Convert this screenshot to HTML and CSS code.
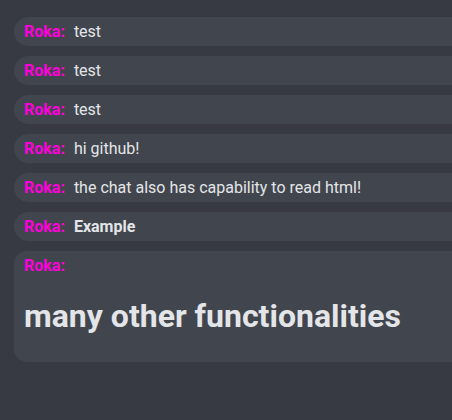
FILE: index.html
```html
<!DOCTYPE html>
<html>
<head>
<meta charset="utf-8">
<link rel="stylesheet" href="styles.css">
</head>
<body>
<div class="chat">
  <div class="msg"><span class="name">Roka:</span> <span class="text">test</span></div>
  <div class="msg"><span class="name">Roka:</span> <span class="text">test</span></div>
  <div class="msg"><span class="name">Roka:</span> <span class="text">test</span></div>
  <div class="msg"><span class="name">Roka:</span> <span class="text">hi github!</span></div>
  <div class="msg"><span class="name">Roka:</span> <span class="text">the chat also has capability to read html!</span></div>
  <div class="msg"><span class="name">Roka:</span> <span class="text"><b>Example</b></span></div>
  <div class="msg big"><span class="name">Roka:</span> <h1 class="heading">many other functionalities</h1></div>
</div>
</body>
</html>
```
FILE: styles.css
```css
html, body {
  margin: 0;
  padding: 0;
  overflow: hidden;
  background: #373a42;
  height: 100%;
}
.chat {
  padding: 17px 0 0 14px;
  width: 500px;
  font-family: Roboto, "Liberation Sans", sans-serif;
  font-size: 16px;
  color: #e3e5e8;
}
.msg {
  background: #41454d;
  border-radius: 15px;
  padding: 5px 10px;
  margin-bottom: 10px;
  line-height: 19px;
}
.msg.big {
  border-radius: 13px;
}
.name {
  color: #ff00dd;
  font-weight: bold;
  margin-right: 5px;
}
.heading {
  font-size: 32px;
  font-weight: bold;
  margin: 22px 0;
  line-height: 38px;
}
```
